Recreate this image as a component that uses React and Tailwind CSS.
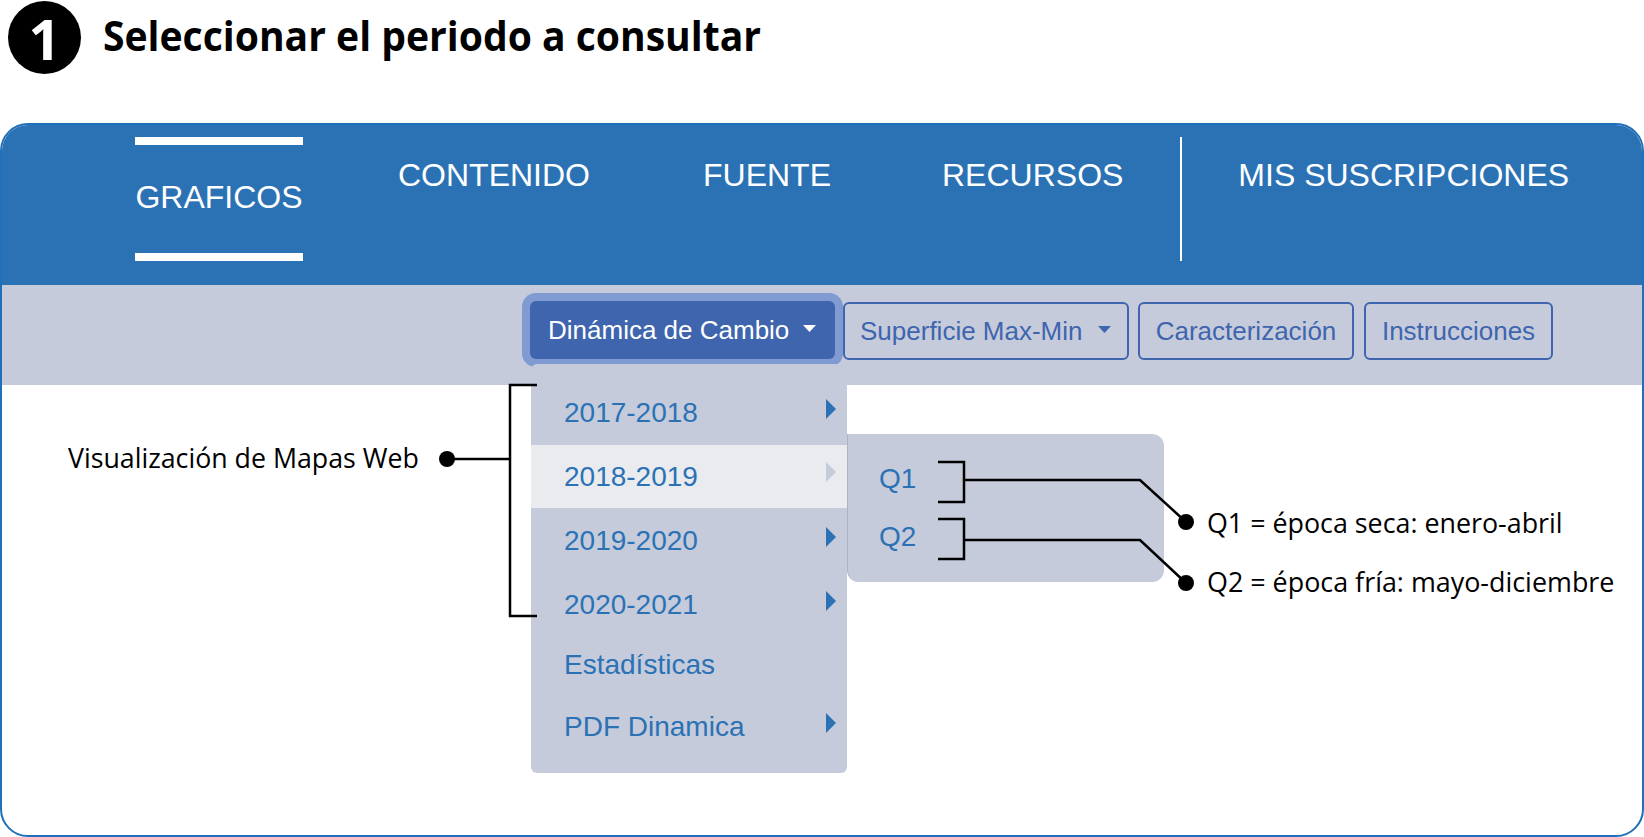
const sans = "font-['Liberation_Sans',Arial,sans-serif]"
const note = "font-['Open_Sans',sans-serif]"

const periods = [
  { label: '2017-2018', h: 'h-[64px]', arrow: true },
  { label: '2018-2019', h: 'h-[63px]', arrow: true, active: true },
  { label: '2019-2020', h: 'h-[64px] pt-[2px]', arrow: true },
  { label: '2020-2021', h: 'h-[64px] pt-[2px]', arrow: true },
  { label: 'Estadísticas', h: 'h-[58px]' },
  { label: 'PDF Dinamica', h: 'h-[66px]', arrow: true },
]

const Arrow = ({ active }) => (
  <svg width="10" height="20" viewBox="0 0 10 20" className="mb-[9px]">
    <path d="M0 0L10 10L0 20Z" fill={active ? '#c5cbdb' : '#2b72b5'} />
  </svg>
)

const Caret = ({ color }) => (
  <svg width="13" height="7" viewBox="0 0 13 7" className="mb-[4px]">
    <path d="M0 0H13L6.5 7Z" fill={color} />
  </svg>
)

const Leaders = () => (
  <svg width="1644" height="837" viewBox="0 0 1644 837" fill="none" className="absolute inset-0 pointer-events-none">
    <g stroke="#000" strokeWidth="2.5">
      <path d="M537 385H510V616H537" />
      <path d="M447 459H510" />
      <path d="M938 462H964V502H938" />
      <path d="M964 480H1140L1186 522" />
      <path d="M938 519H964V559H938" />
      <path d="M964 540H1140L1186 583" />
    </g>
    <circle cx="447" cy="459" r="8" fill="#000" />
    <circle cx="1186" cy="522" r="8" fill="#000" />
    <circle cx="1186" cy="583" r="8" fill="#000" />
  </svg>
)

export default function App() {
  return (
    <div className="relative w-[1644px] h-[837px] overflow-hidden bg-white">
      {/* Step title */}
      <div className="flex h-[123px] items-start pl-[8px] pt-[1px]">
        <div className={`flex w-[73px] h-[73px] items-center justify-center rounded-full bg-black text-white text-[56px] font-bold ${note}`}>1</div>
        <h1 className={`ml-[22px] mt-[6px] origin-left scale-x-[0.953] whitespace-nowrap text-[41px] leading-[56px] font-bold text-black ${note}`}>
          Seleccionar el periodo a consultar
        </h1>
      </div>

      {/* Panel */}
      <div className={`h-[714px] overflow-hidden rounded-[28px] border-2 border-[#1f6fb9] ${sans}`}>
        <nav className="flex h-[160px] bg-[#2b72b5] pl-[133px] pt-[12px] text-[32px] text-white">
          <div className="flex h-[124px] w-[168px] items-center justify-center border-y-8 border-white pb-[4px]">GRAFICOS</div>
          <div className="ml-[95px] mt-[20px] leading-[36px]">CONTENIDO</div>
          <div className="ml-[113px] mt-[20px] leading-[36px]">FUENTE</div>
          <div className="ml-[111px] mt-[20px] leading-[36px]">RECURSOS</div>
          <div className="ml-[57px] h-[124px] w-[2px] bg-white" />
          <div className="ml-[56px] mt-[20px] leading-[36px]">MIS SUSCRIPCIONES</div>
        </nav>

        <div className="flex h-[100px] items-start bg-[#c5cbdb] pl-[528px] pt-[16px] text-[26px]">
          <button className="flex h-[58px] w-[305px] items-center rounded-[6px] bg-[#3e65ad] pl-[18px] text-white ring-[8px] ring-[#7f9bd1]">
            Dinámica de Cambio
            <span className="ml-[14px] flex"><Caret color="#fff" /></span>
          </button>
          <button className="ml-[8px] mt-[1px] flex h-[58px] w-[286px] items-center rounded-[6px] border-2 border-[#3e65ad] pl-[15px] text-[#3e65ad]">
            Superficie Max-Min
            <span className="ml-[15px] flex"><Caret color="#3e65ad" /></span>
          </button>
          <button className="ml-[9px] mt-[1px] h-[58px] w-[216px] rounded-[6px] border-2 border-[#3e65ad] text-[#3e65ad]">Caracterización</button>
          <button className="ml-[10px] mt-[1px] h-[58px] w-[189px] rounded-[6px] border-2 border-[#3e65ad] text-[#3e65ad]">Instrucciones</button>
        </div>
      </div>

      {/* Open menu */}
      <div className={`absolute left-[531px] top-[364px] w-[316px] h-[409px] rounded-[6px] bg-[#c5cbdb] pt-[17px] text-[28px] text-[#2b72b5] ${sans}`}>
        {periods.map(p => (
          <div key={p.label} className={`flex items-center justify-between pl-[33px] pr-[11px] ${p.h} ${p.active ? 'bg-[#e9ebef]' : ''}`}>
            <span>{p.label}</span>
            {p.arrow && <Arrow active={p.active} />}
          </div>
        ))}
      </div>

      {/* Submenu */}
      <div className={`absolute left-[847px] top-[434px] w-[317px] h-[148px] rounded-r-[12px] rounded-bl-[12px] border-l border-[#aeb3c1] bg-[#c5cbdb] pl-[31px] pt-[15px] text-[28px] text-[#2b72b5] ${sans}`}>
        <div className="flex h-[59px] items-center">Q1</div>
        <div className="flex h-[58px] items-center">Q2</div>
      </div>

      <Leaders />

      {/* Annotations */}
      <div className={`absolute left-[68px] top-[437px] origin-left scale-x-[0.955] whitespace-nowrap text-[28px] leading-[40px] text-black ${note}`}>Visualización de Mapas Web</div>
      <div className={`absolute left-[1207px] top-[502px] origin-left scale-x-[0.958] whitespace-nowrap text-[28px] leading-[40px] text-black ${note}`}>Q1 = época seca: enero-abril</div>
      <div className={`absolute left-[1207px] top-[561px] origin-left scale-x-[0.96] whitespace-nowrap text-[28px] leading-[40px] text-black ${note}`}>Q2 = época fría: mayo-diciembre</div>
    </div>
  )
}
